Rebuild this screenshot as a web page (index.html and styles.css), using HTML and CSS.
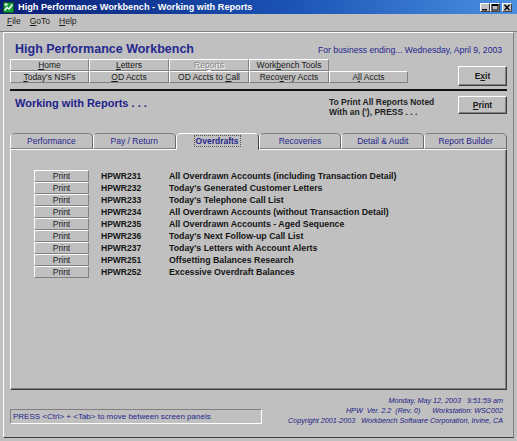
FILE: index.html
```html
<!DOCTYPE html>
<html lang="en">
<head>
<meta charset="UTF-8">
<meta name="viewport" content="width=device-width, initial-scale=1.0">
<title>High Performance Workbench - Working with Reports</title>
<link rel="stylesheet" href="styles.css">
</head>
<body>
<div id="window">
    <div class="titlebar">
        <svg class="appIcon" viewBox="0 0 11 11">
            <rect x="0" y="0" width="11" height="11" fill="#14a03c"/>
            <rect x="0.5" y="0.5" width="10" height="10" fill="none" stroke="#0b5a20"/>
            <polyline points="1.5,8.5 4,5.5 6,7 9.5,2.5" fill="none" stroke="#fff" stroke-width="1.4"/>
            <rect x="1.5" y="1.5" width="3" height="2" fill="#fff"/>
        </svg>
        <span class="titleText">High Performance Workbench - Working with Reports</span>
        <div class="winButtons">
            <span class="winBtn"><svg viewBox="0 0 8 7"><rect x="1" y="5" width="5" height="1.5" fill="#000"/></svg></span>
            <span class="winBtn"><svg viewBox="0 0 8 7"><rect x="1" y="0.5" width="6" height="5.5" fill="none" stroke="#000"/><rect x="1" y="0.5" width="6" height="1.5" fill="#000"/></svg></span>
            <span class="winBtn close"><svg viewBox="0 0 8 7"><path d="M1.5 0.8 L6.5 6.2 M6.5 0.8 L1.5 6.2" stroke="#000" stroke-width="1.4"/></svg></span>
        </div>
    </div>
    <div class="menubar">
        <span><u>F</u>ile</span>
        <span><u>G</u>oTo</span>
        <span><u>H</u>elp</span>
    </div>
    <div class="client">
        <div class="header">
            <h1>High Performance Workbench</h1>
            <span class="businessDate">For business ending... Wednesday, April 9, 2003</span>
        </div>
        <div class="navRow">
            <div class="navGrid">
                <button class="navBtn"><u>H</u>ome</button>
                <button class="navBtn"><u>L</u>etters</button>
                <button class="navBtn disabled">Re<u>p</u>orts</button>
                <button class="navBtn">Work<u>b</u>ench Tools</button>
                <span></span>
                <button class="navBtn"><u>T</u>oday's NSFs</button>
                <button class="navBtn"><u>O</u>D Accts</button>
                <button class="navBtn">OD Accts to <u>C</u>all</button>
                <button class="navBtn">Reco<u>v</u>ery Accts</button>
                <button class="navBtn">A<u>l</u>l Accts</button>
            </div>
            <button class="bigButton exitButton">E<u>x</u>it</button>
        </div>
        <div class="rule"></div>
        <div class="subHeader">
            <h2>Working with Reports . . .</h2>
            <p class="printNote">To Print All Reports Noted<br>With an ('), PRESS . . .</p>
            <button class="bigButton printAll"><u>P</u>rint</button>
        </div>
        <div class="tabs">
            <div class="tab">Performance</div>
            <div class="tab">Pay / Return</div>
            <div class="tab active"><span class="focus">Overdrafts</span></div>
            <div class="tab">Recoveries</div>
            <div class="tab">Detail &amp; Audit</div>
            <div class="tab">Report Builder</div>
        </div>
        <div class="tabPanel">
            <div class="reportRow"><button class="printBtn">Print</button><span class="code">HPWR231</span><span class="desc">All Overdrawn Accounts (including Transaction Detail)</span></div>
            <div class="reportRow"><button class="printBtn">Print</button><span class="code">HPWR232</span><span class="desc">Today's Generated Customer Letters</span></div>
            <div class="reportRow"><button class="printBtn">Print</button><span class="code">HPWR233</span><span class="desc">Today's Telephone Call List</span></div>
            <div class="reportRow"><button class="printBtn">Print</button><span class="code">HPWR234</span><span class="desc">All Overdrawn Accounts (without Transaction Detail)</span></div>
            <div class="reportRow"><button class="printBtn">Print</button><span class="code">HPWR235</span><span class="desc">All Overdrawn Accounts - Aged Sequence</span></div>
            <div class="reportRow"><button class="printBtn">Print</button><span class="code">HPWR236</span><span class="desc">Today's Next Follow-up Call List</span></div>
            <div class="reportRow"><button class="printBtn">Print</button><span class="code">HPWR237</span><span class="desc">Today's Letters with Account Alerts</span></div>
            <div class="reportRow"><button class="printBtn">Print</button><span class="code">HPWR251</span><span class="desc">Offsetting Balances Research</span></div>
            <div class="reportRow"><button class="printBtn">Print</button><span class="code">HPWR252</span><span class="desc">Excessive Overdraft Balances</span></div>
        </div>
        <div class="footer">
            <div class="statusBox">PRESS &lt;Ctrl&gt; + &lt;Tab&gt; to move between screen panels</div>
            <div class="info">
                <div class="infoLine">Monday, May 12, 2003   9:51:59 am</div>
                <div class="infoLine">HPW  Ver. 2.2  (Rev. 0)      Workstation: WSC002</div>
                <div class="infoLine">Copyright 2001-2003   Workbench Software Corporation, Irvine, CA</div>
            </div>
        </div>
    </div>
</div>
</body>
</html>
```

FILE: styles.css
```css
* {
    box-sizing: border-box;
}

body {
    margin: 0;
    background-color: #c0c0c0;
    font-family: "Liberation Sans", Arial, sans-serif;
    color: #1a1a1a;
}

#window {
    width: 517px;
    height: 441px;
    display: flex;
    flex-direction: column;
    background-color: #c0c0c0;
    overflow: hidden;
}

/* title bar */
.titlebar {
    flex: none;
    height: 14px;
    display: flex;
    align-items: center;
    padding: 0 3px 0 3px;
    background: linear-gradient(to right, #0a1f74, #1a52b4 55%, #4a8fe0);
    color: #fff;
}

.appIcon {
    width: 11px;
    height: 11px;
    margin-right: 4px;
}

.titleText {
    flex: 1;
    font-size: 9.2px;
    font-weight: bold;
    line-height: 14px;
    white-space: nowrap;
}

.winButtons {
    display: flex;
    margin-right: 2px;
}

.winBtn {
    width: 10px;
    height: 9px;
    display: flex;
    background-color: #c0c0c0;
    border: 1px solid;
    border-color: #fff #404040 #404040 #fff;
}

.winBtn svg {
    width: 8px;
    height: 7px;
}

.winBtn.close {
    margin-left: 2px;
}

/* menu */
.menubar {
    flex: none;
    height: 18px;
    display: flex;
    gap: 9px;
    padding-left: 7px;
    font-size: 8.5px;
    line-height: 15px;
    border-bottom: 1px solid #808080;
}

/* main area */
.client {
    flex: 1;
    display: flex;
    flex-direction: column;
    margin: 0 3px 3px 3px;
    padding: 0 6px;
    border-top: 1px solid #fff;
    border-left: 1px solid #fff;
    border-right: 1px solid #808080;
    border-bottom: 1px solid #404040;
}

.header {
    display: flex;
    align-items: baseline;
    justify-content: space-between;
    padding-top: 9px;
}

h1 {
    margin: 0;
    padding-left: 5px;
    font-size: 12.5px;
    line-height: 14px;
    color: #25298e;
}

.businessDate {
    margin-right: 5px;
    font-size: 8.6px;
    color: #24248e;
}

.navRow {
    display: flex;
    justify-content: space-between;
    align-items: flex-start;
    margin-top: 3px;
    height: 27px;
}

.navGrid {
    display: grid;
    grid-template-columns: 79px 80px 80px 80px 79px;
    grid-template-rows: 12px 12px;
}

button {
    font-family: inherit;
    margin: 0;
    padding: 0;
    background-color: #c0c0c0;
    color: #1a1a1a;
}

.navBtn {
    height: 12px;
    font-size: 8.5px;
    line-height: 10px;
    border: 1px solid;
    border-color: #fff #808080 #808080 #fff;
}

.navBtn.disabled {
    color: #8a8a8a;
    text-shadow: 1px 1px 0 #fff;
}

.bigButton {
    width: 49px;
    font-size: 8.5px;
    font-weight: bold;
    border: 1px solid;
    border-color: #fff #404040 #404040 #fff;
    box-shadow: inset -1px -1px 0 #808080;
}

.exitButton {
    height: 20px;
    margin-top: 7px;
}

.rule {
    height: 2px;
    margin-top: 3px;
    background-color: #111;
}

.subHeader {
    display: flex;
    align-items: flex-start;
    height: 42px;
    padding-top: 5px;
}

h2 {
    flex: 1;
    margin: 1px 0 0 0;
    padding-left: 5px;
    font-size: 11px;
    line-height: 13px;
    color: #22228a;
}

.printNote {
    width: 129px;
    margin: 1px 0 0 0;
    font-size: 8.5px;
    font-weight: bold;
    line-height: 10px;
    color: #1e1e1e;
}

.printAll {
    height: 18px;
}

/* tabs */
.tabs {
    display: grid;
    grid-template-columns: repeat(6, 1fr);
    height: 16px;
}

.tab {
    height: 16px;
    border: 1px solid;
    border-color: #808080 #6a6a6a #808080 #fff;
    border-radius: 5px 5px 0 0;
    font-size: 8.5px;
    line-height: 14px;
    text-align: center;
    color: #25258c;
}

.tab.active {
    position: relative;
    z-index: 1;
    height: 17px;
    border-color: #fff #404040 transparent #fff;
    background-color: #c0c0c0;
    font-weight: bold;
}

.focus {
    outline: 1px dotted #555;
    padding: 0 1px;
}

.tabPanel {
    height: 241px;
    padding: 20px 0 0 23px;
    border: 1px solid;
    border-color: #fff #404040 #404040 #fff;
    box-shadow: inset -1px -1px 0 #808080;
}

.reportRow {
    display: grid;
    grid-template-columns: 55px 80px auto;
    height: 12px;
    align-items: center;
}

.printBtn {
    width: 55px;
    height: 12px;
    font-size: 8.5px;
    line-height: 10px;
    border: 1px solid;
    border-color: #fff #808080 #808080 #fff;
}

.code,
.desc {
    font-size: 8.5px;
    font-weight: bold;
    line-height: 12px;
    color: #151515;
    white-space: nowrap;
}

.code {
    padding-left: 12px;
}

.desc {
    font-size: 8.8px;
}

/* footer */
.footer {
    flex: 1;
    display: flex;
    justify-content: space-between;
}

.statusBox {
    width: 252px;
    height: 15px;
    margin-top: 19px;
    padding-left: 2px;
    border: 1px solid;
    border-color: #808080 #fff #fff #808080;
    font-size: 8px;
    line-height: 13px;
    color: #25258c;
}

.info {
    padding: 6px 4px 0 0;
    font-size: 7.2px;
    font-style: italic;
    line-height: 10px;
    text-align: right;
    color: #1c1c86;
}

.infoLine {
    white-space: pre;
}
```
